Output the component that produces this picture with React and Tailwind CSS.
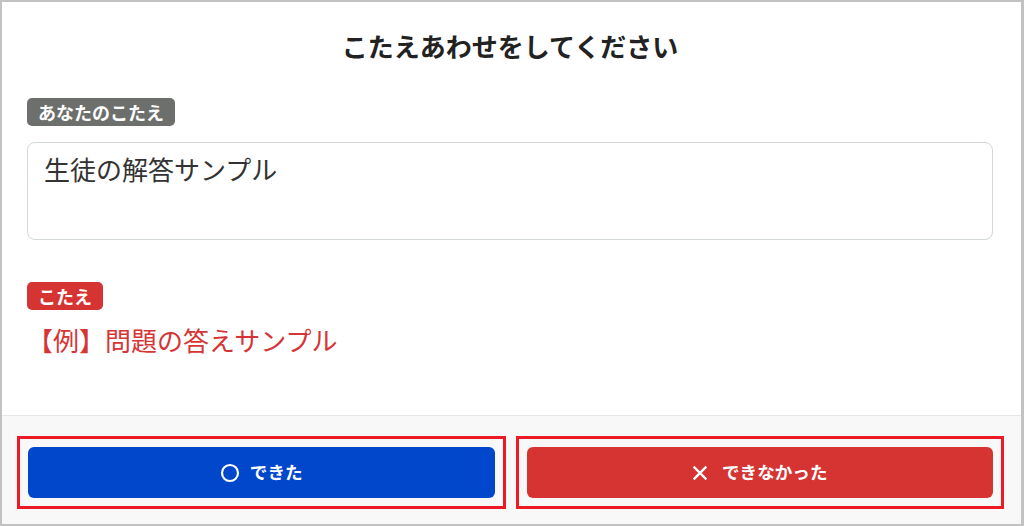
import React from 'react';

const jp = { fontFamily: '"Noto Sans CJK JP", "Noto Sans", sans-serif' };

function CircleIcon() {
  return (
    <svg width="20" height="20" viewBox="0 0 20 20" fill="none" stroke="currentColor" strokeWidth="2.2">
      <circle cx="10" cy="10" r="8" />
    </svg>
  );
}

function CrossIcon() {
  return (
    <svg width="16" height="16" viewBox="0 0 16 16" fill="none" stroke="currentColor" strokeWidth="2.4" strokeLinecap="square">
      <path d="M2.5 2.5 L13.5 13.5 M13.5 2.5 L2.5 13.5" />
    </svg>
  );
}

function Badge({ children, tone }) {
  return (
    <div className="flex">
      <span
        className={`h-[28px] px-[11px] rounded-[5px] flex items-center text-[18px] font-bold leading-none text-white ${tone}`}
      >
        {children}
      </span>
    </div>
  );
}

function AnswerButton({ icon, label, color, gap }) {
  return (
    <div className="outline-[3px] outline outline-[#ec1a24] outline-offset-[8px]">
      <button
        type="button"
        className={`w-full h-[51px] rounded-[6px] flex items-center justify-center ${gap} text-white text-[17.6px] font-bold ${color}`}
      >
        {icon}
        <span>{label}</span>
      </button>
    </div>
  );
}

export default function App() {
  return (
    <div style={jp} className="w-[1024px] h-[526px] bg-white">
      <div className="h-full flex flex-col border-2 border-r-[3px] border-[#c2c2c2]">
        <div className="flex-1 pl-[25px] pr-[28px] pt-[26px]">
          <h1 className="text-center text-[26px] leading-[36px] font-bold text-[#222222]">
            こたえあわせをしてください
          </h1>

          <div className="mt-[34px]">
            <Badge tone="bg-[#6d6f6d]">あなたのこたえ</Badge>
          </div>

          <div className="mt-[16px] h-[98px] border border-[#d2d8d8] rounded-[8px] pl-[16px] pt-[8px] text-[26px] leading-[36px] text-[#333333]">
            生徒の解答サンプル
          </div>

          <div className="mt-[42px]">
            <Badge tone="bg-[#d63333]">こたえ</Badge>
          </div>

          <p className="mt-[12px] text-[26px] leading-[36px] text-[#d63535]">
            【例】問題の答えサンプル
          </p>
        </div>

        <div className="h-[109px] border-t border-[#e6e6e6] bg-[#f8f8f8] pl-[26px] pr-[28px] pt-[31px]">
          <div className="grid grid-cols-2 gap-[32px]">
            <AnswerButton
              icon={<CircleIcon />}
              label="できた"
              color="bg-[#0047cc]"
              gap="gap-[10px]"
            />
            <AnswerButton
              icon={<CrossIcon />}
              label="できなかった"
              color="bg-[#d63333]"
              gap="gap-[14px]"
            />
          </div>
        </div>
      </div>
    </div>
  );
}
